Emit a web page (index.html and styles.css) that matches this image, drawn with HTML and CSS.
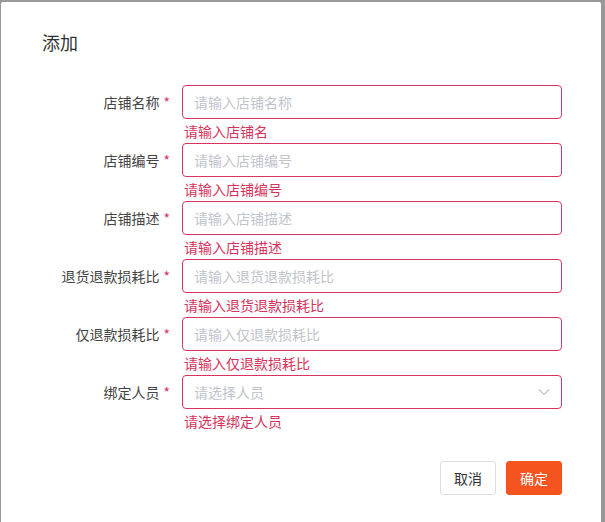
FILE: index.html
```html
<!DOCTYPE html>
<html lang="zh-CN">
<head>
<meta charset="utf-8">
<title>添加</title>
<link rel="stylesheet" href="styles.css">
</head>
<body>
<div class="overlay">
  <div class="dialog">
    <div class="dialog-header">添加</div>
    <form class="form">
      <div class="field">
        <label class="label">店铺名称<span class="req">*</span></label>
        <div class="control">
          <div class="input"><span class="ph">请输入店铺名称</span></div>
          <div class="error">请输入店铺名</div>
        </div>
      </div>
      <div class="field">
        <label class="label">店铺编号<span class="req">*</span></label>
        <div class="control">
          <div class="input"><span class="ph">请输入店铺编号</span></div>
          <div class="error">请输入店铺编号</div>
        </div>
      </div>
      <div class="field">
        <label class="label">店铺描述<span class="req">*</span></label>
        <div class="control">
          <div class="input"><span class="ph">请输入店铺描述</span></div>
          <div class="error">请输入店铺描述</div>
        </div>
      </div>
      <div class="field">
        <label class="label">退货退款损耗比<span class="req">*</span></label>
        <div class="control">
          <div class="input"><span class="ph">请输入退货退款损耗比</span></div>
          <div class="error">请输入退货退款损耗比</div>
        </div>
      </div>
      <div class="field">
        <label class="label">仅退款损耗比<span class="req">*</span></label>
        <div class="control">
          <div class="input"><span class="ph">请输入仅退款损耗比</span></div>
          <div class="error">请输入仅退款损耗比</div>
        </div>
      </div>
      <div class="field">
        <label class="label">绑定人员<span class="req">*</span></label>
        <div class="control">
          <div class="input select"><span class="ph">请选择人员</span>
            <svg class="chev" width="12" height="8" viewBox="0 0 12 8"><path d="M1 1.5 L6 6.5 L11 1.5" fill="none" stroke="#c0c4cc" stroke-width="1.2"/></svg>
          </div>
          <div class="error">请选择绑定人员</div>
        </div>
      </div>
    </form>
    <div class="footer">
      <button type="button" class="btn btn-default">取消</button>
      <button type="button" class="btn btn-primary">确定</button>
    </div>
  </div>
</div>
</body>
</html>
```
FILE: styles.css
```css
html, body {
  margin: 0;
  padding: 0;
  background: #999999;
  height: 100%;
  overflow: hidden;
  font-family: "Noto Sans CJK SC", "Noto Sans", sans-serif;
}
.overlay {
  padding: 2px 0 0 1px;
}
.dialog {
  width: 600px;
  height: 540px;
  background: #ffffff;
  border-radius: 2px;
  box-sizing: border-box;
}
.dialog-header {
  padding: 28px 0 0 41px;
  height: 55px;
  font-size: 18px;
  line-height: 24px;
  color: #303133;
  box-sizing: border-box;
}
.form {
  margin-top: 28px;
}
.field {
  display: flex;
  align-items: flex-start;
}
.label {
  width: 169px;
  margin-right: 12px;
  text-align: right;
  font-size: 14px;
  line-height: 34px;
  color: #444444;
}
.req {
  color: #d8345f;
  margin-left: 4px;
}
.control {
  width: 380px;
}
.input {
  height: 34px;
  border: 1px solid #d8345f;
  border-radius: 4px;
  box-sizing: border-box;
  padding: 0 11px;
  display: flex;
  align-items: center;
  font-size: 14px;
}
.ph {
  color: #c0c4cc;
}
.select {
  justify-content: space-between;
}
.error {
  font-size: 14px;
  line-height: 24px;
  padding-left: 2px;
  color: #d6335c;
}
.footer {
  display: flex;
  justify-content: flex-end;
  gap: 10px;
  width: 561px;
  margin-top: 28px;
}
.btn {
  width: 56px;
  height: 34px;
  border-radius: 3px;
  font-size: 14px;
  font-family: inherit;
  padding: 0;
  cursor: pointer;
}
.btn-default {
  background: #ffffff;
  border: 1px solid #dcdfe6;
  color: #333333;
}
.btn-primary {
  background: #f5531f;
  border: 1px solid #f5531f;
  color: #ffffff;
}
```
